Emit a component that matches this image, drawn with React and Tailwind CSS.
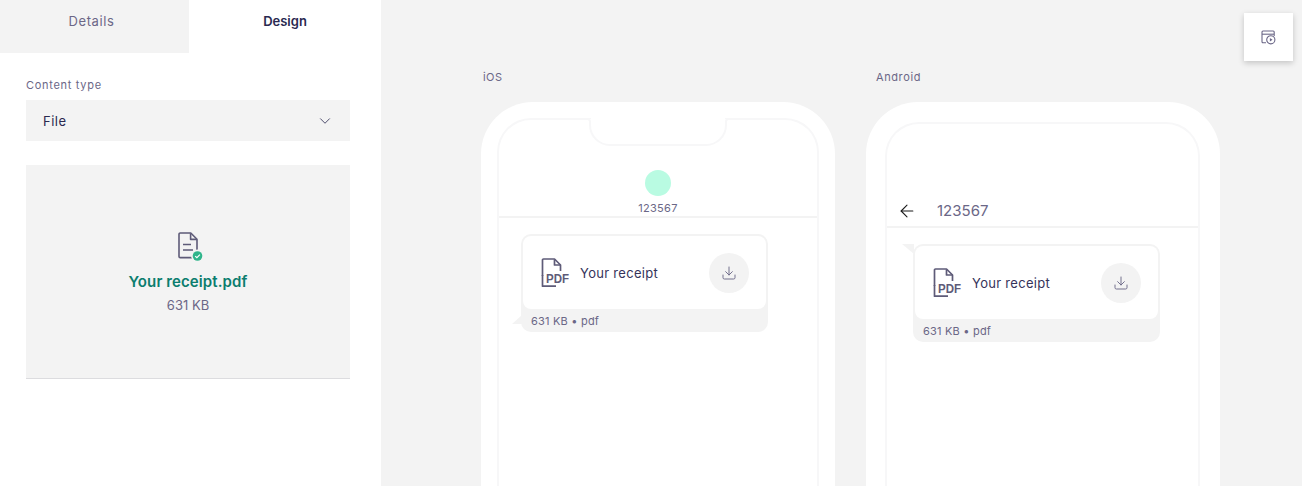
import React from 'react';
import { ChevronDown, Download, ArrowLeft } from 'lucide-react';

const font = { fontFamily: 'Inter, "Noto Sans", sans-serif' };

const FileCheckIcon = () => (
  <svg width="26" height="30" viewBox="0 0 26 30" fill="none" className="block">
    <path d="M2.2 1h10.6l6.2 6.2V25.6H2.2a1.2 1.2 0 0 1-1.2-1.2V2.2A1.2 1.2 0 0 1 2.2 1z" stroke="#5e5b78" strokeWidth="1.6" strokeLinejoin="round" />
    <path d="M12.6 1.2v6.2H19" stroke="#5e5b78" strokeWidth="1.6" strokeLinejoin="round" />
    <path d="M5 12.500h8M5 18h10" stroke="#5e5b78" strokeWidth="1.6" />
    <circle cx="19.500" cy="24" r="6.400" fill="#f3f3f3" />
    <circle cx="19.500" cy="24" r="4.800" fill="#2fb58b" />
    <path d="M17.200 24.100l1.700 1.600 3-3" stroke="#fff" strokeWidth="1.200" fill="none" />
  </svg>
);

const PdfIcon = () => (
  <svg width="34" height="30" viewBox="0 0 34 30" fill="none" className="block shrink-0">
    <path d="M1.500 18V2a1 1 0 0 1 1-1h11l6 6v6" stroke="#5e5b78" strokeWidth="1.700" strokeLinejoin="round" />
    <path d="M13.500 1.500V7h6" stroke="#5e5b78" strokeWidth="1.700" strokeLinejoin="round" />
    <path d="M1.500 17v11.200h13.500" stroke="#5e5b78" strokeWidth="1.700" strokeLinejoin="round" />
    <text x="5" y="25" fontSize="13.500" fontWeight="700" fill="#5e5b78" textLength="23" lengthAdjust="spacingAndGlyphs" style={{ fontFamily: '"Liberation Sans", sans-serif' }}>PDF</text>
  </svg>
);

const ScheduleIcon = () => (
  <svg width="15" height="15" viewBox="0 0 15 15" fill="none" className="block">
    <path d="M5 12.800H2a1 1 0 0 1-1-1V2a1 1 0 0 1 1-1h10.200a1 1 0 0 1 1 1v4" stroke="#6b6787" strokeWidth="1.100" />
    <path d="M1 4.200h12" stroke="#6b6787" strokeWidth="1.100" />
    <circle cx="9.800" cy="9.800" r="4.100" stroke="#6b6787" strokeWidth="1.100" />
    <path d="M8.900 8v3.600l2.600-1.800z" fill="#6b6787" />
  </svg>
);

const Notch = () => (
  <svg width="146" height="30" viewBox="0 0 146 30" fill="none" className="absolute left-[86px] top-[-2px] block">
    <path d="M0 1h2.500a2.500 2.500 0 0 1 2.500 2.500V7a20 20 0 0 0 20 20h96a20 20 0 0 0 20-20V3.500a2.500 2.500 0 0 1 2.500-2.500H146" fill="#fff" stroke="#f7f7f8" strokeWidth="2" />
    <rect x="6" y="0" width="134" height="8" fill="#fff" />
  </svg>
);

const Bubble = ({ tail }) => (
  <div className="relative w-[247px] rounded-[10px] bg-[#f3f3f3] px-[2px] pt-[2px]">
    {tail === 'bottom' && (
      <div className="absolute bottom-[8px] left-[-9px] w-0 h-0 border-b-[9px] border-b-[#f3f3f3] border-l-[10px] border-l-transparent" />
    )}
    {tail === 'top' && (
      <div className="absolute top-0 left-[-11px] w-0 h-0 border-t-[10px] border-t-[#f3f3f3] border-l-[12px] border-l-transparent" />
    )}
    <div className="flex items-center h-[73px] rounded-[8px] bg-white pl-[18px] pr-[17px]">
      <PdfIcon />
      <span className="ml-[5px] pt-[3px] text-[13px] tracking-[0.3px] text-[#35335a]">Your receipt</span>
      <div className="ml-auto flex items-center justify-center w-[40px] h-[40px] rounded-full bg-[#f3f3f3]">
        <Download size={16} strokeWidth={1.4} color="#6b6787" />
      </div>
    </div>
    <div className="flex items-center h-[23px] pt-[2px] pl-[8px] text-[11px] tracking-[0.2px] text-[#6b6787]">631 KB • pdf</div>
  </div>
);

export default function App() {
  return (
    <div className="flex h-[486px] w-[1302px] overflow-hidden bg-[#f3f3f3]" style={font}>
      <aside className="w-[381px] shrink-0 bg-white">
        <div className="flex h-[53px]">
          <div className="flex w-[189px] items-center justify-center pb-[9px] pr-[6px] bg-[#f3f3f3] text-[13px] tracking-[0.6px] text-[#6b6787]">Details</div>
          <div className="flex flex-1 items-center justify-center pb-[10px] text-[13px] font-semibold text-[#2a2950]">Design</div>
        </div>
        <div className="px-[26px] pt-[25px] w-[376px]">
          <label className="block text-[11px] leading-[14px] tracking-[0.7px] text-[#6b6787]">Content type</label>
          <div className="mt-[8px] flex h-[41px] items-center justify-between bg-[#f3f3f3] pl-[17px] pr-[16px]">
            <span className="pt-[2px] text-[13px] tracking-[0.5px] text-[#2a2950]">File</span>
            <ChevronDown size={18} strokeWidth={1.1} color="#2a2950" />
          </div>
          <div className="mt-[24px] flex h-[214px] flex-col items-center bg-[#f3f3f3] border-b border-[#dcdcdf] pt-[67px]">
            <div className="ml-[6px]"><FileCheckIcon /></div>
            <div className="mt-[10px] text-[15px] leading-[20px] font-semibold tracking-[0.1px] text-[#0b7d6e]">Your receipt.pdf</div>
            <div className="mt-[4px] text-[13px] leading-[18px] text-[#6b6787]">631 KB</div>
          </div>
        </div>
      </aside>

      <main className="relative flex-1 pl-[100px] pt-[70px]">
        <div className="flex gap-[31px]">
          <section className="w-[354px]">
            <div className="h-[32px] pl-[2px] text-[11px] leading-[14px] tracking-[0.4px] text-[#6b6787]">iOS</div>
            <div className="h-[400px] rounded-t-[52px] bg-white px-[16px] pt-[16px]">
              <div className="relative h-full rounded-t-[34px] border-x-2 border-t-2 border-[#f7f7f8]">
                <Notch />
                <div className="flex flex-col items-center h-[98px] border-b-2 border-[#f3f3f3] pt-[50px]">
                  <div className="w-[26px] h-[26px] rounded-full bg-[#b9fbe2]" />
                  <div className="mt-[5px] text-[11px] leading-[14px] tracking-[0.3px] text-[#6b6787]">123567</div>
                </div>
                <div className="pl-[22px] pt-[16px]">
                  <Bubble tail="bottom" />
                </div>
              </div>
            </div>
          </section>

          <section className="w-[354px]">
            <div className="h-[32px] pl-[10px] text-[11px] leading-[14px] tracking-[0.6px] text-[#6b6787]">Android</div>
            <div className="h-[400px] rounded-t-[52px] bg-white pl-[19px] pr-[20px] pt-[20px]">
              <div className="h-full rounded-t-[34px] border-x-2 border-t-2 border-[#f7f7f8]">
                <div className="flex items-end h-[104px] border-b-2 border-[#f3f3f3] pb-[5px] pl-[10px]">
                  <ArrowLeft size={20} strokeWidth={1.3} color="#1a1a1a" />
                  <span className="ml-[20px] text-[15px] leading-[20px] text-[#6b6787]">123567</span>
                </div>
                <div className="pl-[26px] pt-[16px]">
                  <Bubble tail="top" />
                </div>
              </div>
            </div>
          </section>
        </div>

        <button className="absolute right-[9px] top-[13px] flex w-[49px] h-[48px] items-center justify-center bg-white shadow-[0_2px_6px_rgba(0,0,0,0.2)]">
          <ScheduleIcon />
        </button>
      </main>
    </div>
  );
}
